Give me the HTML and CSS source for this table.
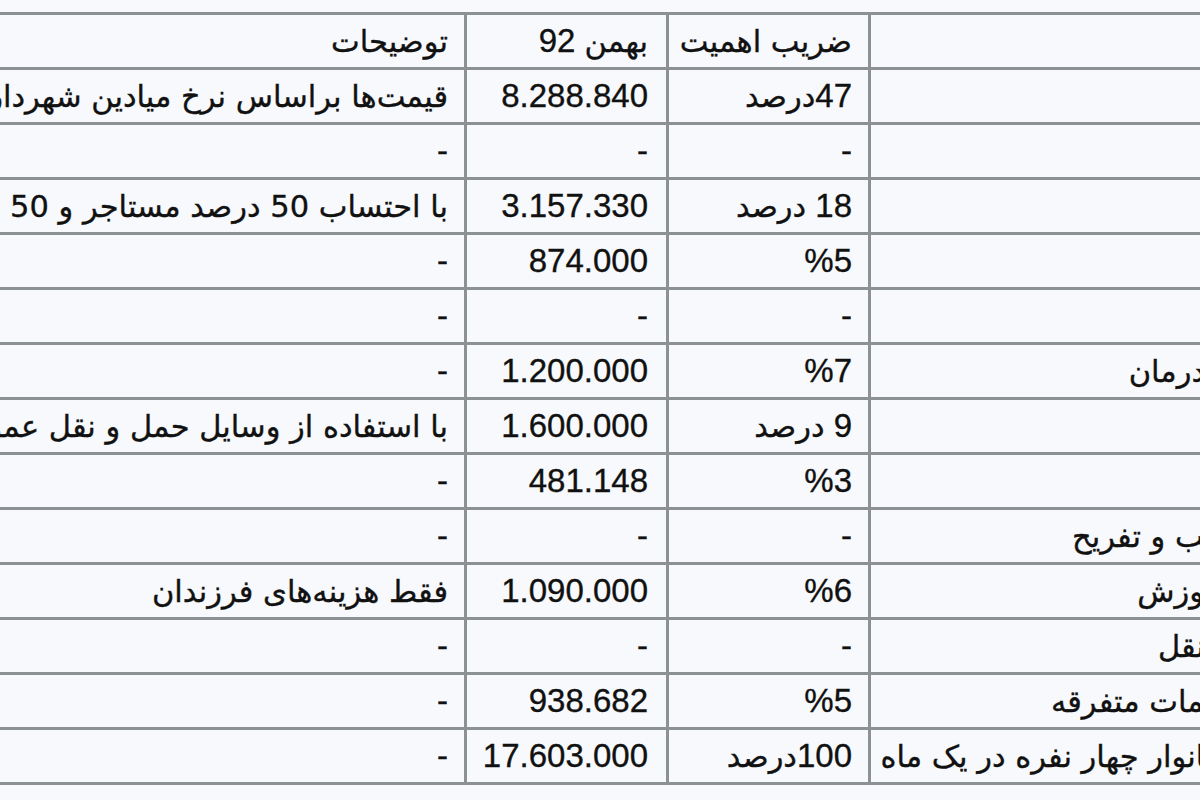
FILE: index.html
```html
<!DOCTYPE html>
<html lang="fa">
<head>
<meta charset="utf-8">
<title>هزینه خانوار</title>
<link rel="stylesheet" href="styles.css">
</head>
<body>
<div class="frame">
<table class="sheet">
<colgroup><col class="w1"><col class="w2"><col class="w3"><col class="w4"></colgroup>
<tbody>
<tr><td class="c1"></td><td><span class="fa">ضریب اهمیت</span></td><td class="c3"><span class="fa">بهمن</span> 92</td><td><span class="fa">توضیحات</span></td></tr>
<tr><td class="c1"></td><td>47<span class="fa">درصد</span></td><td class="c3">8.288.840</td><td><span class="fa">قیمت‌ها براساس نرخ میادین شهرداری</span></td></tr>
<tr><td class="c1"></td><td>-</td><td class="c3">-</td><td>-</td></tr>
<tr><td class="c1"></td><td>18 <span class="fa">درصد</span></td><td class="c3">3.157.330</td><td><span class="fa">با احتساب 50 درصد مستاجر و 50 درصد مالک</span></td></tr>
<tr><td class="c1"></td><td>%5</td><td class="c3">874.000</td><td>-</td></tr>
<tr><td class="c1"></td><td>-</td><td class="c3">-</td><td>-</td></tr>
<tr><td class="c1"><span class="fa">درمان</span></td><td>%7</td><td class="c3">1.200.000</td><td>-</td></tr>
<tr><td class="c1"></td><td>9 <span class="fa">درصد</span></td><td class="c3">1.600.000</td><td><span class="fa">با استفاده از وسایل حمل و نقل عمومی</span></td></tr>
<tr><td class="c1"></td><td>%3</td><td class="c3">481.148</td><td>-</td></tr>
<tr><td class="c1"><span class="fa">&zwj;ب و تفریح</span></td><td>-</td><td class="c3">-</td><td>-</td></tr>
<tr><td class="c1"><span class="fa">&zwj;وزش</span></td><td>%6</td><td class="c3">1.090.000</td><td><span class="fa">فقط هزینه‌های فرزندان</span></td></tr>
<tr><td class="c1"><span class="fa">نقل</span></td><td>-</td><td class="c3">-</td><td>-</td></tr>
<tr><td class="c1"><span class="fa">&zwj;مات متفرقه</span></td><td>%5</td><td class="c3">938.682</td><td>-</td></tr>
<tr><td class="c1"><span class="fa">&zwj;انوار چهار نفره در یک ماه</span></td><td>100<span class="fa">درصد</span></td><td class="c3">17.603.000</td><td>-</td></tr>
</tbody>
</table>
</div>
</body>
</html>
```

FILE: styles.css
```css
html, body {
  margin: 0;
  padding: 0;
  background: #f7f9fc;
}

.frame {
  width: 1200px;
  height: 800px;
  overflow: hidden;
  direction: rtl;
}

.sheet {
  border-collapse: collapse;
  table-layout: fixed;
  width: 1545px;
  margin: 12px -12px 0 0;
  font-family: "Liberation Sans", "DejaVu Sans", sans-serif;
  font-size: 33px;
  color: #111;
  -webkit-text-stroke: 0.35px #111;
}

.fa {
  font-family: "DejaVu Sans", sans-serif;
  font-size: 30.5px;
}

.w1 { width: 341px; }
.w2 { width: 202px; }
.w3 { width: 202px; }
.w4 { width: 800px; }

.sheet tr {
  height: 55px;
}

.sheet td {
  border: 3px solid #8c9191;
  padding: 0 16px 0 16px;
  text-align: right;
  white-space: nowrap;
  vertical-align: middle;
}

.sheet td.c1 {
  padding-right: 4px;
}

.sheet td.c3 {
  padding-right: 18px;
}
```
